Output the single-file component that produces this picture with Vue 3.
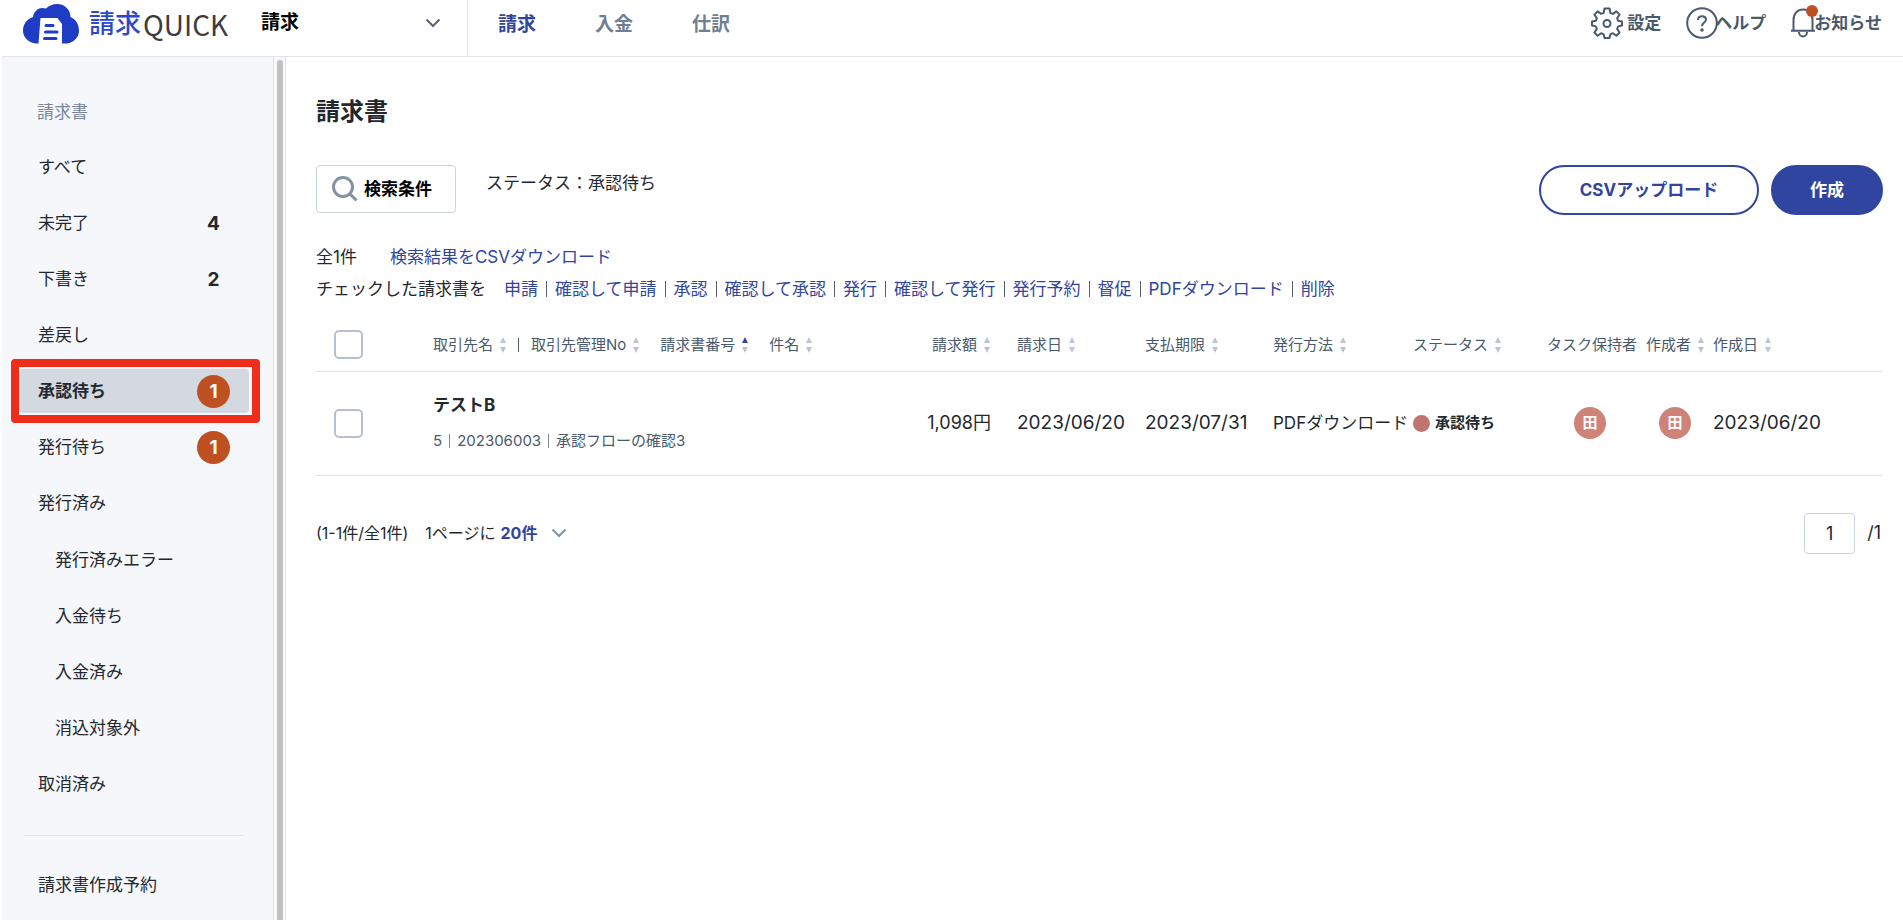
<script setup>
import { ref } from 'vue'

// ヘッダー
const service = ref('請求')
const tabs = ['請求', '入金', '仕訳']
const currentTab = ref('請求')

// サイドメニュー
const menu = [
  { label: 'すべて' },
  { label: '未完了', count: 4 },
  { label: '下書き', count: 2 },
  { label: '差戻し' },
  { label: '承認待ち', count: 1, alert: true },
  { label: '発行待ち', count: 1, alert: true },
  {
    label: '発行済み',
    children: ['発行済みエラー', '入金待ち', '入金済み', '消込対象外']
  },
  { label: '取消済み' }
]
const currentMenu = ref('承認待ち')

// 一括操作
const actions = [
  '申請', '確認して申請', '承認', '確認して承認', '発行',
  '確認して発行', '発行予約', '督促', 'PDFダウンロード', '削除'
]

// 一覧
const nameHeads = [
  { label: '取引先名' },
  { label: '取引先管理No' },
  { label: '請求書番号', asc: true },
  { label: '件名' }
]
const heads = [
  { label: '請求額', cls: 'amount', sort: true },
  { label: '請求日', sort: true },
  { label: '支払期限', sort: true },
  { label: '発行方法', sort: true },
  { label: 'ステータス', sort: true },
  { label: 'タスク保持者' },
  { label: '作成者', sort: true },
  { label: '作成日', sort: true }
]
const invoices = ref([
  {
    id: 1,
    client: 'テストB',
    clientNo: '5',
    invoiceNo: '202306003',
    subject: '承認フローの確認3',
    amount: '1,098円',
    billed: '2023/06/20',
    due: '2023/07/31',
    method: 'PDFダウンロード',
    status: '承認待ち',
    holder: '田',
    author: '田',
    created: '2023/06/20',
    checked: false
  }
])

const allChecked = ref(false)
const toggleAll = () => {
  invoices.value.forEach((item) => {
    item.checked = allChecked.value
  })
}

const perPage = ref('20件')
const page = ref('1')
</script>

<template>
  <div class="app">
    <header class="header">
      <div class="brand">
        <a href="#" class="logo">
          <svg class="cloud" viewBox="0 0 56 40">
            <path d="M13 39.500C5 38.500 0 33 0 26.500C0 20 4 15 10 13C11 6 17 2.500 23 4.500C26 1.500 30 0 34 0C42 0 47.500 6 47.500 13C52.500 15 56 20 56 26.500C56 33 51 38.500 44 39.500H39V20L34.500 14H17.500L15.500 39.500Z" />
            <path d="M23 21.500H30M22.500 28H34M21.500 34.500H33" />
          </svg>
          <span class="logo-ja">請求</span><span class="logo-en">QUICK</span>
        </a>
        <label class="service">
          <select v-model="service" aria-label="サービス">
            <option>請求</option>
          </select>
          <svg class="chevron" viewBox="0 0 16 10"><path d="M1.500 1.500L8 8L14.500 1.500" /></svg>
        </label>
      </div>

      <nav class="tabs">
        <a
          v-for="tab in tabs"
          :key="tab"
          href="#"
          :class="{ active: tab === currentTab }"
          @click.prevent="currentTab = tab"
        >{{ tab }}</a>
      </nav>

      <div class="tools">
        <a href="#" class="tool setting">
          <svg class="tool-icon" viewBox="0 0 32 32">
            <path d="M13.500 1.500h5l.8 4.300 2.600 1.100L25.400 4.400 28.600 7.600 26.100 11.200l1.100 2.600 3.800.7v4l-3.800.9-1.100 2.500 2.500 3.600-3.200 3.200-3.500-2.500-2.600 1.100-.8 3.700h-5l-.8-3.700-2.600-1.100-3.500 2.500-3.200-3.200 2.500-3.600-1.100-2.500L1 18.500v-4l3.800-.7 1.100-2.600L3.400 7.600 6.600 4.400l3.500 2.500 2.600-1.100z" />
            <circle cx="16" cy="16.500" r="3.500" />
          </svg>
          設定
        </a>
        <a href="#" class="tool help">
          <svg class="tool-icon" viewBox="0 0 32 32">
            <circle cx="16" cy="16" r="14.800" />
            <path d="M12 13C12 10.500 13.700 9.300 16 9.300C18.300 9.300 20 10.700 20 12.800C20 15.500 16 15.700 16 19.200" />
            <circle cx="16" cy="23" r="0.800" />
          </svg>
          ヘルプ
        </a>
        <a href="#" class="tool notice">
          <svg class="bell" viewBox="0 0 24 30">
            <path d="M2.500 22.500V12C2.500 5.500 6.500 1.500 12 1.500S21.500 5.500 21.500 12V22.500M0 22.800H24M8 24C8 30 16 30 16 24" />
          </svg>
          <i class="dot"></i>
          お知らせ
        </a>
      </div>
    </header>

    <div class="body">
      <aside class="sidebar">
        <h2>請求書</h2>
        <ul class="menu">
          <li v-for="item in menu" :key="item.label">
            <a
              href="#"
              class="menu-item"
              :class="{ active: item.label === currentMenu }"
              @click.prevent="currentMenu = item.label"
            >
              {{ item.label }}
              <span v-if="item.count" class="count" :class="{ alert: item.alert }">{{ item.count }}</span>
            </a>
            <ul v-if="item.children" class="menu sub">
              <li v-for="child in item.children" :key="child">
                <a href="#" class="menu-item">{{ child }}</a>
              </li>
            </ul>
          </li>
        </ul>
        <hr />
        <a href="#" class="menu-item">請求書作成予約</a>
      </aside>
      <div class="track"><div class="thumb"></div></div>

      <main class="main">
        <h1>請求書</h1>

        <div class="toolbar">
          <button class="search">
            <svg viewBox="0 0 26 26">
              <circle cx="11" cy="11" r="9.500" />
              <path d="M18 18L24.500 24.500" />
            </svg>
            検索条件
          </button>
          <p class="condition">ステータス：承認待ち</p>
          <button class="pill outline">CSVアップロード</button>
          <button class="pill solid">作成</button>
        </div>

        <div class="result">
          <span>全1件</span>
          <a href="#">検索結果をCSVダウンロード</a>
        </div>
        <div class="bulk">
          <span>チェックした請求書を</span>
          <ul>
            <li v-for="action in actions" :key="action">
              <a href="#">{{ action }}</a>
            </li>
          </ul>
        </div>

        <table>
          <colgroup>
            <col class="c-check" />
            <col />
            <col class="c-amount" />
            <col class="c-date" />
            <col class="c-date" />
            <col class="c-method" />
            <col class="c-status" />
            <col class="c-holder" />
            <col class="c-author" />
            <col class="c-created" />
          </colgroup>
          <thead>
            <tr>
              <th class="check">
                <input v-model="allChecked" type="checkbox" aria-label="すべて選択" @change="toggleAll" />
              </th>
              <th>
                <div class="name-heads">
                  <span v-for="head in nameHeads" :key="head.label" class="head">
                    {{ head.label }}
                    <svg class="sort" :class="{ asc: head.asc }" viewBox="0 0 8 16">
                      <path d="M4 0L7 6H1Z" /><path d="M4 16L1 10H7Z" />
                    </svg>
                  </span>
                </div>
              </th>
              <th v-for="head in heads" :key="head.label" :class="head.cls">
                <span class="head">
                  {{ head.label }}
                  <svg v-if="head.sort" class="sort" viewBox="0 0 8 16">
                    <path d="M4 0L7 6H1Z" /><path d="M4 16L1 10H7Z" />
                  </svg>
                </span>
              </th>
            </tr>
          </thead>
          <tbody>
            <tr v-for="item in invoices" :key="item.id">
              <td class="check">
                <input v-model="item.checked" type="checkbox" :aria-label="item.client" />
              </td>
              <td>
                <div class="client">{{ item.client }}</div>
                <div class="detail">
                  <span>{{ item.clientNo }}</span>
                  <span>{{ item.invoiceNo }}</span>
                  <span>{{ item.subject }}</span>
                </div>
              </td>
              <td class="amount number">{{ item.amount }}</td>
              <td class="number">{{ item.billed }}</td>
              <td class="number">{{ item.due }}</td>
              <td>{{ item.method }}</td>
              <td><span class="status">{{ item.status }}</span></td>
              <td class="holder"><span class="avatar">{{ item.holder }}</span></td>
              <td class="author"><span class="avatar">{{ item.author }}</span></td>
              <td class="number">{{ item.created }}</td>
            </tr>
          </tbody>
        </table>

        <div class="pager">
          <span class="range">(1-1件/全1件)</span>
          <label class="per-page">
            1ページに
            <select v-model="perPage">
              <option>20件</option>
            </select>
            <svg class="chevron" viewBox="0 0 16 10"><path d="M1.500 1.500L8 8L14.500 1.500" /></svg>
          </label>
          <label class="page">
            <input v-model="page" type="text" aria-label="ページ" />
            /1
          </label>
        </div>
      </main>
    </div>
  </div>
</template>

<style>
body {
  background: #fff;
}
</style>

<style scoped>
.app {
  min-height: 100vh;
  padding-left: 2px;
  box-sizing: border-box;
  display: flex;
  flex-direction: column;
  font-family: Inter, "Noto Sans CJK JP", sans-serif;
  font-size: 17px;
  line-height: 24px;
  color: #23272e;
}

.app * {
  box-sizing: border-box;
}

h1,
h2,
p,
ul {
  margin: 0;
  padding: 0;
}

ul {
  list-style: none;
}

a {
  color: #3045a0;
  text-decoration: none;
}

button,
select,
input {
  margin: 0;
  padding: 0;
  border: none;
  background: #fff;
  font: inherit;
  color: inherit;
}

select {
  appearance: none;
  cursor: pointer;
}

svg {
  display: block;
  flex-shrink: 0;
  fill: none;
}

/* ヘッダー */
.header {
  display: flex;
  height: 57px;
  border-bottom: 1px solid #e3e3ec;
}

.brand {
  display: flex;
  width: 466px;
  padding-left: 21px;
  border-right: 1px solid #e3e3ec;
}

.logo {
  display: flex;
  align-items: center;
  width: 238px;
  height: 48px;
  line-height: 48px;
  white-space: nowrap;
}

.cloud {
  width: 56px;
  height: 40px;
  margin-right: 10px;
}

.cloud path:first-child {
  fill: #1f3cc4;
}

.cloud path:last-child {
  stroke: #1f3cc4;
  stroke-width: 3;
  stroke-linecap: round;
}

.logo-ja {
  margin-right: 2px;
  font-size: 26px;
  font-weight: 500;
  color: #2b48cf;
}

.logo-en {
  font-family: "Noto Sans CJK JP", sans-serif;
  font-size: 28px;
  color: #3c3c3c;
}

.service {
  display: flex;
  flex: 1;
  align-items: center;
  justify-content: space-between;
  height: 45px;
  padding-right: 26px;
}

.service select {
  font-size: 19px;
  font-weight: 700;
  color: #000;
}

.chevron {
  width: 16px;
  height: 10px;
  stroke: #5c6470;
  stroke-width: 2;
}

.tabs {
  display: flex;
  gap: 59px;
  padding-left: 30px;
  line-height: 50px;
  font-size: 19px;
  font-weight: 700;
}

.tabs a {
  color: #6f7f91;
}

.tabs a.active {
  color: #3045a0;
}

.tools {
  display: flex;
  gap: 25px;
  height: 45px;
  margin-left: auto;
  padding-right: 21px;
}

.tool {
  position: relative;
  display: flex;
  align-items: center;
  font-weight: 700;
  color: #4a5a6d;
}

.tool-icon {
  width: 32px;
  height: 32px;
  stroke: #4a5a6d;
  stroke-width: 2;
  stroke-linejoin: round;
}

.setting .tool-icon {
  margin-right: 4px;
}

.help .tool-icon {
  margin-right: -3px;
}

.bell {
  width: 24px;
  height: 30px;
  margin-right: -1px;
  stroke: #4a5a6d;
  stroke-width: 2;
}

.dot {
  position: absolute;
  top: 5px;
  left: 15px;
  width: 12px;
  height: 12px;
  border-radius: 50%;
  background: #bf5022;
}

/* サイドメニュー */
.body {
  display: flex;
  flex: 1;
}

.sidebar {
  width: 271px;
  padding: 43px 24px 8px 17px;
  background: #f5f7fb;
}

.sidebar h2 {
  padding-left: 18px;
  margin-bottom: 21px;
  font-size: 17px;
  font-weight: 400;
  color: #77869a;
}

.menu {
  display: flex;
  flex-direction: column;
  gap: 12px;
}

.menu.sub {
  margin-top: 13px;
}

.menu-item {
  position: relative;
  display: flex;
  align-items: center;
  justify-content: space-between;
  height: 44px;
  padding: 0 19px;
  border-radius: 4px;
  color: #23272e;
}

.sub .menu-item {
  padding-left: 36px;
}

.menu-item.active {
  background: #d4d8e1;
  font-weight: 700;
}

/* 選択中の項目を囲む赤枠 */
.menu-item.active::after {
  content: "";
  position: absolute;
  inset: -10px -11px -10px -8px;
  border: 8px solid #ee2d1a;
  border-radius: 4px;
}

.count {
  width: 33px;
  height: 33px;
  border-radius: 50%;
  line-height: 33px;
  text-align: center;
  font-size: 19px;
  font-weight: 700;
}

.count.alert {
  background: #bf5022;
  color: #fff;
}

hr {
  height: 1px;
  margin: 29px 5px 27px;
  border: none;
  background: #e1e3eb;
}

.track {
  width: 13px;
  padding: 3px 2px 0 3px;
  border-left: 1px solid #e3e3e6;
  border-right: 1px solid #e3e3e6;
  background: #fafafa;
}

.thumb {
  height: 100%;
  border-radius: 4px 4px 0 0;
  background: #c1c1c1;
}

/* メイン */
.main {
  flex: 1;
  min-width: 0;
  padding: 39px 20px 0 30px;
}

h1 {
  margin-bottom: 37px;
  font-size: 24px;
  line-height: 32px;
  font-weight: 700;
}

.toolbar {
  display: flex;
  margin-bottom: 30px;
}

.search {
  display: flex;
  align-items: center;
  gap: 6px;
  height: 48px;
  padding: 0 23px 0 15px;
  border: 1px solid #ccd2de;
  border-radius: 4px;
  font-weight: 700;
  color: #000;
  cursor: pointer;
}

.search svg {
  width: 26px;
  height: 26px;
  stroke: #8391a5;
  stroke-width: 3;
}

.condition {
  flex: 1;
  margin: 6px 0 0 30px;
}

.pill {
  height: 50px;
  border: 2px solid #3045a0;
  border-radius: 25px;
  font-weight: 700;
  cursor: pointer;
}

.pill.outline {
  width: 220px;
  margin-right: 12px;
  color: #3045a0;
}

.pill.solid {
  width: 112px;
  background: #3045a0;
  color: #fff;
}

.result {
  display: flex;
  gap: 33px;
  margin-bottom: 8px;
}

.bulk,
.bulk ul {
  display: flex;
}

.bulk ul {
  margin-left: 18px;
}

.bulk li {
  display: flex;
  align-items: center;
}

.bulk li + li::before {
  content: "";
  width: 1px;
  height: 16px;
  margin: 0 8px;
  background: #5c6068;
}

/* 一覧 */
table {
  width: 100%;
  margin-top: 18px;
  border-collapse: collapse;
  table-layout: fixed;
}

.c-check { width: 117px; }
.c-amount { width: 100px; }
.c-date { width: 128px; }
.c-method { width: 140px; }
.c-status { width: 134px; }
.c-holder { width: 99px; }
.c-author { width: 67px; }
.c-created { width: 170px; }

th,
td {
  padding: 0;
  border-bottom: 1px solid #e1e3eb;
  text-align: left;
  vertical-align: middle;
  white-space: nowrap;
}

th {
  height: 52px;
  font-size: 15px;
  font-weight: 400;
  color: #4a5a6d;
}

td {
  height: 104px;
}

.head {
  display: inline-flex;
  align-items: center;
  gap: 6px;
}

.name-heads {
  display: flex;
}

.name-heads .head + .head {
  margin-left: 20px;
}

.name-heads .head:nth-child(2) {
  margin-left: 0;
}

.name-heads .head:nth-child(2)::before {
  content: "";
  width: 1px;
  height: 14px;
  margin: 0 6px 0 11px;
  background: #4a5a6d;
}

.sort {
  width: 8px;
  height: 16px;
  fill: #bcc4d1;
}

.sort.asc path:first-child {
  fill: #3045a0;
}

.check {
  padding-left: 18px;
}

.check input {
  display: block;
  width: 29px;
  height: 29px;
  border: 2px solid #b8c0cf;
  border-radius: 5px;
  appearance: none;
}

.check input:checked {
  background: #3045a0;
}

.amount {
  padding-right: 26px;
  text-align: right;
}

td.number {
  font-size: 19px;
}

td.amount {
  font-size: 18px;
}

.client {
  margin-bottom: 12px;
  font-weight: 700;
}

.detail {
  display: flex;
  align-items: center;
  font-size: 15px;
  color: #4a5a6d;
}

.detail span + span::before {
  content: "";
  display: inline-block;
  width: 1px;
  height: 14px;
  margin: 0 7px;
  background: #7c8796;
  vertical-align: -2px;
}

.status {
  display: flex;
  align-items: center;
  gap: 5px;
  font-size: 15px;
  font-weight: 700;
}

.status::before {
  content: "";
  width: 17px;
  height: 17px;
  border-radius: 50%;
  background: #c0746f;
}

.avatar {
  display: block;
  width: 32px;
  height: 32px;
  border-radius: 50%;
  background: #cf8277;
  line-height: 32px;
  text-align: center;
  font-size: 15px;
  font-weight: 700;
  color: #fff;
}

.holder {
  padding-left: 27px;
}

.author {
  padding-left: 13px;
}

/* ページ送り */
.pager {
  display: flex;
  align-items: center;
  margin-top: 37px;
  font-size: 16px;
}

.per-page {
  display: flex;
  align-items: center;
  gap: 5px;
  margin-left: 17px;
}

.per-page select {
  margin-right: 8px;
  font-weight: 700;
  color: #3045a0;
}

.per-page .chevron {
  stroke: #8391a5;
}

.page {
  display: flex;
  align-items: center;
  gap: 12px;
  margin-left: auto;
  padding-right: 2px;
  font-size: 18px;
}

.page input {
  width: 51px;
  height: 41px;
  border: 1px solid #ccd2de;
  border-radius: 4px;
  text-align: center;
}
</style>
